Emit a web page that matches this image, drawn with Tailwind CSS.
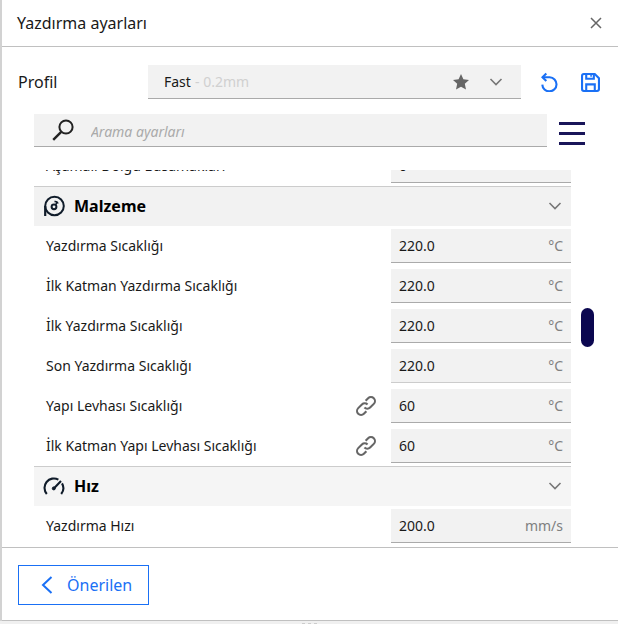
<!DOCTYPE html>
<html lang="tr">
<head>
    <meta charset="UTF-8">
    <meta name="viewport" content="width=device-width, initial-scale=1.0">
    <title>Yazdırma ayarları</title>

    <!-- Tailwind CSS -->
    <script src="https://cdn.jsdelivr.net/npm/@tailwindcss/browser@4"></script>
</head>
<body class="bg-[#f0f0f0] font-['Noto_Sans',sans-serif] text-sm text-[#191919]">
    <!-- İkonlar -->
    <svg class="hidden">
        <symbol id="icon-chevron" viewBox="0 0 14 10">
            <path d="M1.5 2 7 7.5 12.5 2" fill="none" stroke="currentColor" stroke-width="1.6"/>
        </symbol>
        <symbol id="icon-link" viewBox="0 0 20 20">
            <g fill="none" stroke="currentColor" stroke-width="2.1" transform="rotate(-45 10 10)">
                <path d="M6.5 14H3a4 4 0 0 1 0-8h5.2a4 4 0 0 1 4 4"/>
                <path d="M13.5 6H17a4 4 0 0 1 0 8h-5.2a4 4 0 0 1-4-4"/>
            </g>
        </symbol>
    </svg>

    <div class="border-l-2 border-[#d2d2d2] bg-white">
        <!-- Başlık -->
        <header class="flex h-[47px] items-center justify-between border-b border-[#c0c0c0] pr-4 pl-[15px]">
            <h1 class="text-base">Yazdırma ayarları</h1>
            <button type="button" aria-label="Kapat" class="text-[#666]">
                <svg class="size-3" viewBox="0 0 12 12"><path d="M1 1l10 10M11 1 1 11" stroke="currentColor" stroke-width="1.5"/></svg>
            </button>
        </header>

        <!-- Profil seçimi -->
        <div class="flex items-center pt-[18px] pr-[18px] pl-4">
            <label for="profile" class="w-[130px] text-base">Profil</label>
            <div class="relative flex-1">
                <select id="profile" class="block h-[34px] w-full appearance-none border-b border-[#aaa] bg-[#f2f2f2] pl-4">
                    <option>Fast</option>
                </select>
                <div class="pointer-events-none absolute inset-0 flex items-center pr-[18px] pl-[47px]">
                    <span class="flex-1 text-[#d0d0d0]">- 0.2mm</span>
                    <svg class="mr-5 size-4 text-[#666]" viewBox="0 0 16 16"><path d="M8 0l2.4 5.3 5.6.6-4.2 3.9L13 15.6 8 12.7l-5 2.9 1.2-5.8L0 5.9l5.6-.6z" fill="currentColor"/></svg>
                    <svg class="h-[10px] w-[14px] text-[#777]"><use href="#icon-chevron"/></svg>
                </div>
            </div>
            <button type="button" aria-label="Sıfırla" class="ml-5 text-[#1a70f5]">
                <svg class="h-5 w-[18px]" viewBox="0 0 18 20" fill="none" stroke="currentColor" stroke-width="2.1">
                    <path d="M1.5 5.2H8.7a7.1 7.1 0 1 1-7.4 7.4"/>
                    <path d="M5.3 1.4 1.5 5.2l3.8 3.8"/>
                </svg>
            </button>
            <button type="button" aria-label="Kaydet" class="ml-[22px] text-[#1a70f5]">
                <svg class="size-[19px]" viewBox="0 0 20 20" fill="none" stroke="currentColor" stroke-width="2.2">
                    <path d="M3 1.1h11.5l4.4 4.4V17a2 2 0 0 1-2 1.9H3A2 2 0 0 1 1.1 17V3A2 2 0 0 1 3 1.1z"/>
                    <path d="M5.5 1v5h8V1M5.5 19v-7h9v7"/>
                    <path d="M10.6 2v2" stroke-width="1.6"/>
                </svg>
            </button>
        </div>

        <!-- Arama -->
        <div class="flex items-center gap-3 pt-[14px] pr-[33px] pl-8">
            <label class="flex h-[33px] flex-1 items-center border-b border-[#aaa] bg-[#f2f2f2] pl-[18px]">
                <svg class="h-[22px] w-[22px]" viewBox="0 0 22 22" fill="none" stroke="#222" stroke-width="2"><circle cx="14" cy="8" r="6.6"/><path d="M9.2 12.8 1.2 20.8" stroke-width="2.4"/></svg>
                <input type="text" aria-label="Arama ayarları" placeholder="Arama ayarları" class="h-8 flex-1 pt-1 pl-[17px] italic outline-none placeholder:text-[#aaa]">
            </label>
            <button type="button" aria-label="Görünürlük" class="flex h-[34px] w-[26px] flex-col justify-end gap-[7px] pb-[2px]">
                <span class="h-[3px] w-full bg-[#191559]"></span>
                <span class="h-[3px] w-full bg-[#191559]"></span>
                <span class="h-[3px] w-full bg-[#191559]"></span>
            </button>
        </div>

        <!-- Ayar listesi -->
        <main class="flex gap-[10px] pt-[23px] pr-6 pl-8">
            <div class="flex-1">
                <div class="flex h-4 items-end overflow-hidden">
                    <div class="flex h-10 w-full shrink-0 items-center pl-3">
                        <label for="infill-steps" class="flex-1">Aşamalı Dolgu Basamakları</label>
                        <div class="flex h-[34px] w-[180px] items-center border-b border-[#aaa] bg-[#f2f2f2] px-2">
                            <input id="infill-steps" type="text" value="0" class="w-full min-w-0 flex-1 outline-none">
                        </div>
                    </div>
                </div>

                <button type="button" class="flex h-10 w-full items-center border-t border-[#ccc] bg-[#f2f2f2] px-[9px] pb-[2px] text-left text-black">
                    <svg class="size-[22px]" viewBox="0 0 22 22" fill="none" stroke="#101c2a">
                        <circle cx="11.5" cy="11" r="9.3" stroke-width="2"/>
                        <path d="M2.2 11v10" stroke-width="2.2"/>
                        <circle cx="11" cy="11.8" r="2.4" stroke-width="2"/>
                        <path d="M11.5 6.6c1.8-.3 2.9.4 3.6 1.9M13 9.6l.8-3" stroke-width="1.6"/>
                    </svg>
                    <span class="ml-[9px] flex-1 text-base font-bold">Malzeme</span>
                    <svg class="h-[10px] w-[14px] text-[#777]"><use href="#icon-chevron"/></svg>
                </button>

                <div class="flex h-10 items-center pl-3">
                    <label for="print-temp" class="flex-1">Yazdırma Sıcaklığı</label>
                    <div class="flex h-[34px] w-[180px] items-center border-b border-[#aaa] bg-[#f2f2f2] px-2">
                        <input id="print-temp" type="text" value="220.0" class="w-full min-w-0 flex-1 outline-none">
                        <span class="text-[#808080]">°C</span>
                    </div>
                </div>
                <div class="flex h-10 items-center pl-3">
                    <label for="first-layer-temp" class="flex-1">İlk Katman Yazdırma Sıcaklığı</label>
                    <div class="flex h-[34px] w-[180px] items-center border-b border-[#aaa] bg-[#f2f2f2] px-2">
                        <input id="first-layer-temp" type="text" value="220.0" class="w-full min-w-0 flex-1 outline-none">
                        <span class="text-[#808080]">°C</span>
                    </div>
                </div>
                <div class="flex h-10 items-center pl-3">
                    <label for="initial-temp" class="flex-1">İlk Yazdırma Sıcaklığı</label>
                    <div class="flex h-[34px] w-[180px] items-center border-b border-[#aaa] bg-[#f2f2f2] px-2">
                        <input id="initial-temp" type="text" value="220.0" class="w-full min-w-0 flex-1 outline-none">
                        <span class="text-[#808080]">°C</span>
                    </div>
                </div>
                <div class="flex h-10 items-center pl-3">
                    <label for="final-temp" class="flex-1">Son Yazdırma Sıcaklığı</label>
                    <div class="flex h-[34px] w-[180px] items-center border-b border-[#ccc] bg-[#f2f2f2] px-2">
                        <input id="final-temp" type="text" value="220.0" class="w-full min-w-0 flex-1 outline-none">
                        <span class="text-[#808080]">°C</span>
                    </div>
                </div>
                <div class="flex h-10 items-center pl-3">
                    <label for="plate-temp" class="flex-1">Yapı Levhası Sıcaklığı</label>
                    <svg class="mr-[15px] size-5 text-[#666]"><use href="#icon-link"/></svg>
                    <div class="flex h-[34px] w-[180px] items-center border-b border-[#aaa] bg-[#f2f2f2] px-2">
                        <input id="plate-temp" type="text" value="60" class="w-full min-w-0 flex-1 outline-none">
                        <span class="text-[#808080]">°C</span>
                    </div>
                </div>
                <div class="flex h-10 items-center pl-3">
                    <label for="first-layer-plate-temp" class="flex-1">İlk Katman Yapı Levhası Sıcaklığı</label>
                    <svg class="mr-[15px] size-5 text-[#666]"><use href="#icon-link"/></svg>
                    <div class="flex h-[34px] w-[180px] items-center border-b border-[#aaa] bg-[#f2f2f2] px-2">
                        <input id="first-layer-plate-temp" type="text" value="60" class="w-full min-w-0 flex-1 outline-none">
                        <span class="text-[#808080]">°C</span>
                    </div>
                </div>

                <button type="button" class="flex h-10 w-full items-center border-t border-[#ccc] bg-[#f5f5f5] px-[9px] pb-[2px] text-left text-black">
                    <svg class="size-[22px]" viewBox="0 0 22 22" fill="none" stroke="#101c2a" stroke-width="2.1">
                        <path d="M3.8 19A9.4 9.4 0 0 1 15.4 4.6M19 8.4A9.4 9.4 0 0 1 18.2 19"/>
                        <path d="M10.8 13.4 18 6"/>
                        <circle cx="10.8" cy="13.4" r="1.5" fill="#101c2a" stroke-width="1"/>
                    </svg>
                    <span class="ml-[9px] flex-1 text-base font-bold">Hız</span>
                    <svg class="h-[10px] w-[14px] text-[#777]"><use href="#icon-chevron"/></svg>
                </button>

                <div class="flex h-10 items-center pl-3">
                    <label for="print-speed" class="flex-1">Yazdırma Hızı</label>
                    <div class="flex h-[34px] w-[180px] items-center border-b border-[#aaa] bg-[#f2f2f2] px-2">
                        <input id="print-speed" type="text" value="200.0" class="w-full min-w-0 flex-1 outline-none">
                        <span class="text-[#808080]">mm/s</span>
                    </div>
                </div>
            </div>

            <!-- Kaydırma çubuğu -->
            <div class="w-[13px] pt-[138px]">
                <div class="h-[39px] rounded-full bg-[#0b0750]"></div>
            </div>
        </main>

        <!-- Alt bölüm -->
        <footer class="mt-px border-y border-[#c0c0c0] px-4 pt-[17px] pb-[15px]">
            <button type="button" class="flex h-10 w-[131px] items-center border border-[#1a70f5] pl-[22px] text-base text-[#1a70f5]">
                <svg class="h-[18px] w-3" viewBox="0 0 12 18"><path d="M10.5 1 2 9l8.5 8" fill="none" stroke="currentColor" stroke-width="2"/></svg>
                <span class="ml-[14px]">Önerilen</span>
            </button>
        </footer>
    </div>

    <!-- Tutamaç -->
    <div class="flex justify-center gap-[3px] pt-[2px]">
        <span class="h-px w-[3px] bg-[#ccc]"></span>
        <span class="h-px w-[3px] bg-[#ccc]"></span>
        <span class="h-px w-[3px] bg-[#ccc]"></span>
    </div>
</body>
</html>
